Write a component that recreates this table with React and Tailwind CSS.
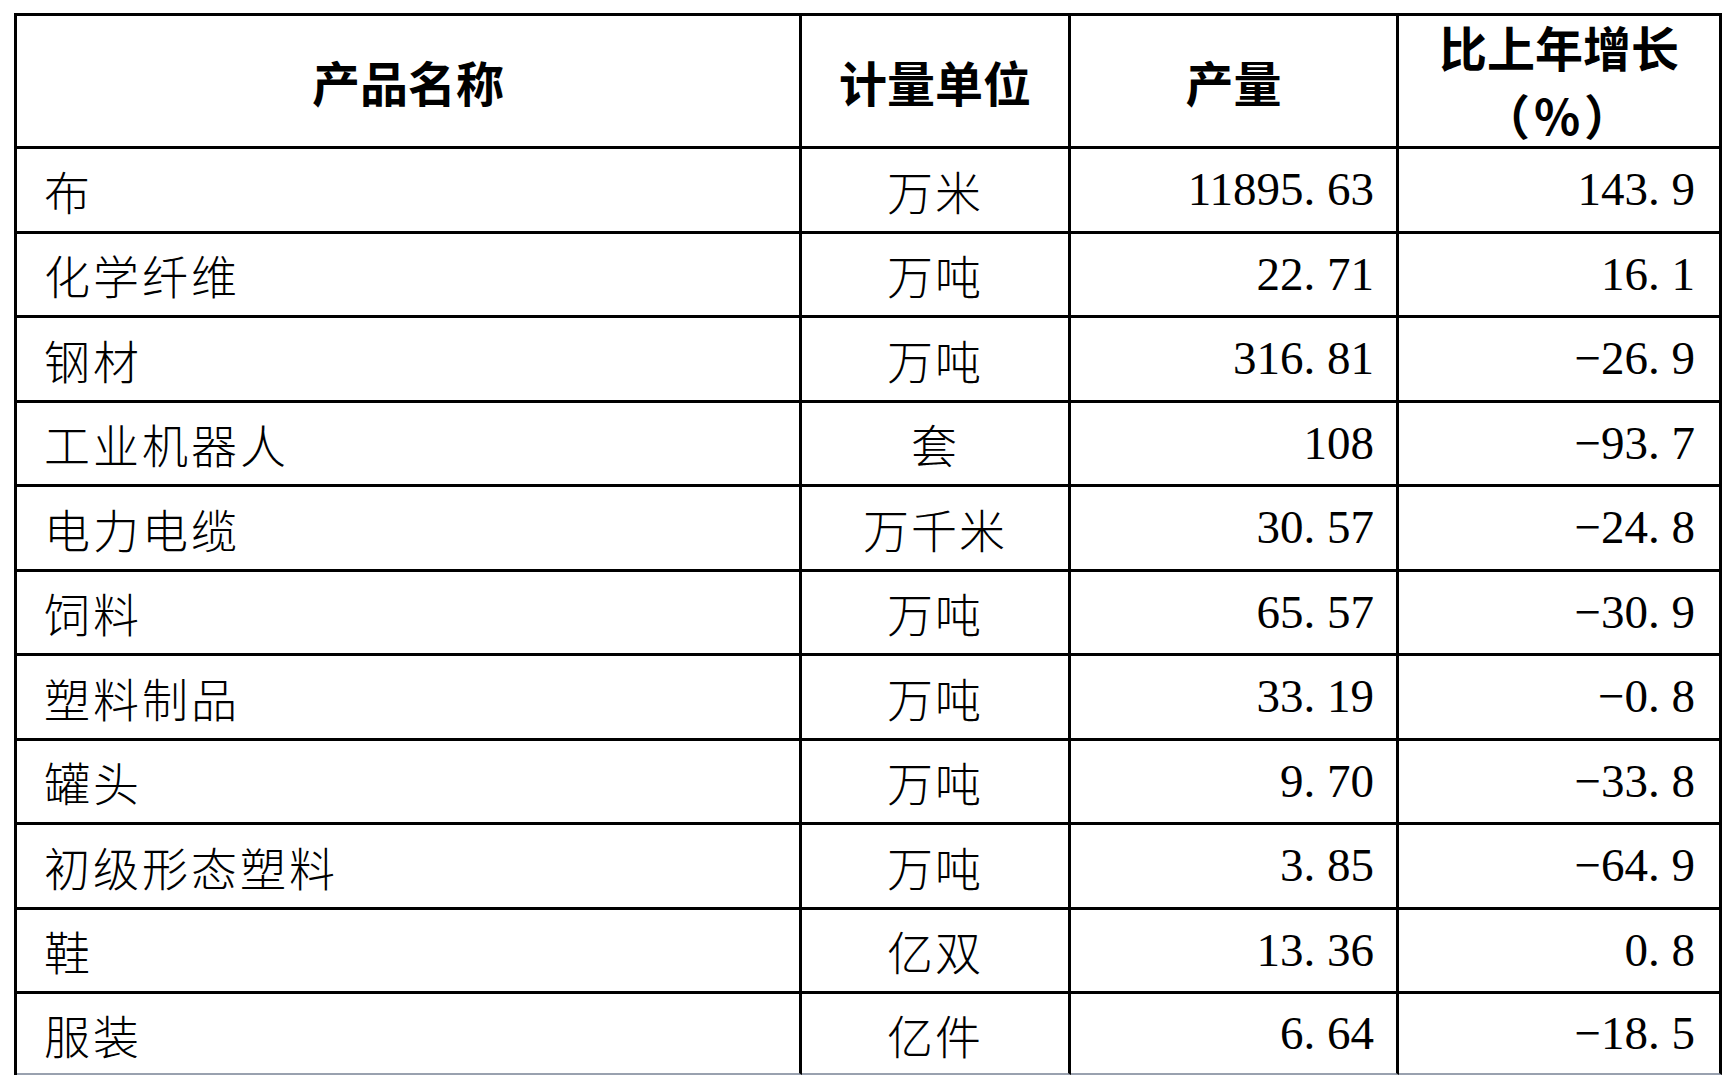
const rows = [
  { name: '布', unit: '万米', output: '11895.63', growth: '143.9' },
  { name: '化学纤维', unit: '万吨', output: '22.71', growth: '16.1' },
  { name: '钢材', unit: '万吨', output: '316.81', growth: '−26.9' },
  { name: '工业机器人', unit: '套', output: '108', growth: '−93.7' },
  { name: '电力电缆', unit: '万千米', output: '30.57', growth: '−24.8' },
  { name: '饲料', unit: '万吨', output: '65.57', growth: '−30.9' },
  { name: '塑料制品', unit: '万吨', output: '33.19', growth: '−0.8' },
  { name: '罐头', unit: '万吨', output: '9.70', growth: '−33.8' },
  { name: '初级形态塑料', unit: '万吨', output: '3.85', growth: '−64.9' },
  { name: '鞋', unit: '亿双', output: '13.36', growth: '0.8' },
  { name: '服装', unit: '亿件', output: '6.64', growth: '−18.5' },
];

const cjk = "font-['Noto_Sans_CJK_SC',sans-serif]";
const num = "font-['Liberation_Serif','Noto_Sans_CJK_SC',serif]";

// SimSun style: the point takes half an em, like the digits
function Num({ value }) {
  const [a, b] = value.split('.');
  return (
    <span className={`${num} text-[47px] leading-none whitespace-nowrap`}>
      {a}
      {b !== undefined && (
        <>
          <span className="inline-block w-[0.5em]">.</span>
          {b}
        </>
      )}
    </span>
  );
}

const head = `${cjk} font-semibold text-[48px] leading-none border-r-[3px] border-b-[3px] border-black flex items-center justify-center`;

export default function App() {
  return (
    <div className="min-h-screen w-full bg-white pl-[14px] pt-[13px] overflow-hidden">
      <div className="w-[1708px] border-t-[3px] border-l-[3px] border-black text-black">
        {/* header */}
        <div className="grid grid-cols-[785px_269px_328px_323px] h-[133px]">
          <div className={head}>产品名称</div>
          <div className={head}>计量单位</div>
          <div className={head}>产量</div>
          <div className={`${head} flex-col gap-[20px] pb-[2px]`}>
            <span className="leading-none">比上年增长</span>
            <span className="leading-none tracking-[4px]">（%）</span>
          </div>
        </div>

        {rows.map((r, i) => {
          const last = i === rows.length - 1;
          const rowH = last ? 'h-[81px]' : 'h-[84.5px]';
          const bb = last ? 'border-b-2 border-b-gray-400' : 'border-b-[3px] border-b-black';
          return (
            <div key={r.name} className={`grid grid-cols-[785px_269px_328px_323px] ${rowH}`}>
              <div className={`${cjk} font-light text-[46px] tracking-[3px] leading-none border-r-[3px] border-r-black ${bb} flex items-center pl-[27px]`}>
                {r.name}
              </div>
              <div className={`${cjk} font-light text-[46px] tracking-[2px] leading-none border-r-[3px] border-r-black ${bb} flex items-center justify-center`}>
                {r.unit}
              </div>
              <div className={`border-r-[3px] border-r-black ${bb} flex items-center justify-end pr-[22px]`}>
                <Num value={r.output} />
              </div>
              <div className={`border-r-[3px] border-r-black ${bb} flex items-center justify-end pr-[24px]`}>
                <Num value={r.growth} />
              </div>
            </div>
          );
        })}
      </div>
    </div>
  );
}
